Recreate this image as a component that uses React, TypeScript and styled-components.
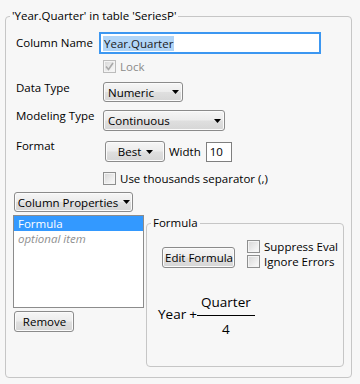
import styled, { createGlobalStyle } from "styled-components";

const GlobalStyle = createGlobalStyle`
  html, body {
    margin: 0;
    padding: 0;
    background: #f7f7f7;
  }

  body {
    font-family: "Open Sans", "Noto Sans", sans-serif;
    font-size: 11.5px;
    color: #000000;
  }
`;

const Page = styled.div`
  width: 360px;
  height: 384px;
  box-sizing: border-box;
  padding: 8px 0 0 5px;
  overflow: hidden;
`;

const GroupBox = styled.fieldset<{ $width: number; $height?: number }>`
  box-sizing: border-box;
  width: ${(p) => p.$width}px;
  ${(p) => (p.$height ? `height: ${p.$height}px;` : "")}
  min-width: 0;
  margin: 0;
  padding: 0;
  border: 1px solid #c6c6c6;
  border-radius: 4px;
`;

const Legend = styled.legend`
  margin-left: 4px;
  padding: 0 2px;
  height: 16px;
  line-height: 16px;
  white-space: nowrap;
`;

const GroupBody = styled.div<{ $pad: string }>`
  display: flex;
  flex-direction: column;
  padding: ${(p) => p.$pad};
`;

const Row = styled.div<{ $top: number; $height: number }>`
  display: flex;
  align-items: center;
  margin-top: ${(p) => p.$top}px;
  height: ${(p) => p.$height}px;
`;

const Label = styled.span<{ $shift?: number }>`
  width: 87px;
  flex: none;
  line-height: 16px;
  white-space: nowrap;
  ${(p) =>
    p.$shift !== undefined
      ? `align-self: flex-start; margin-top: ${p.$shift}px;`
      : ""}
`;

const NameField = styled.div`
  box-sizing: border-box;
  width: 222px;
  height: 22px;
  margin-left: -4px;
  padding: 0 2px;
  display: flex;
  align-items: center;
  background: #ffffff;
  border: 2px solid #3c97f1;
`;

const Selected = styled.span`
  background: #b1d5f7;
  color: #1b1b1b;
  line-height: 15px;
  padding: 0 1px;
`;

const Button = styled.button<{ $width: number; $height?: number; $align?: string }>`
  box-sizing: border-box;
  width: ${(p) => p.$width}px;
  height: ${(p) => p.$height ?? 20}px;
  margin: 0;
  padding: 0 3px 0 4px;
  display: inline-flex;
  align-items: center;
  justify-content: ${(p) => p.$align ?? "center"};
  gap: 5px;
  font: inherit;
  color: #000000;
  white-space: nowrap;
  border: 1px solid #8b8b8b;
  border-radius: 3px;
  background: linear-gradient(#f6f6f6 0%, #ececec 48%, #dfdfdf 52%, #d6d6d6 100%);
  box-shadow: inset 0 0 0 1px #fbfbfb;

  svg {
    flex: none;
  }
`;

const Arrow = () => (
  <svg width="7" height="4" viewBox="0 0 7 4">
    <polygon points="0,0 7,0 3.5,4" fill="#000000" />
  </svg>
);

const Check = styled.span<{ $disabled?: boolean }>`
  box-sizing: border-box;
  width: 13px;
  height: 13px;
  flex: none;
  display: inline-flex;
  align-items: center;
  justify-content: center;
  border: 1px solid ${(p) => (p.$disabled ? "#bcbcbc" : "#8e8f8f")};
  background: linear-gradient(135deg, #d6d6d6 0%, #f1f1f1 70%, #fafafa 100%);
  box-shadow: inset 0 0 0 1px #f4f4f4;
`;

const CheckLabel = styled.span<{ $disabled?: boolean }>`
  margin-left: 4px;
  line-height: 15px;
  white-space: nowrap;
  color: ${(p) => (p.$disabled ? "#8a8a8a" : "#000000")};
`;

const Indent = styled.div<{ $left: number; $top?: number }>`
  display: flex;
  align-items: center;
  margin-left: ${(p) => p.$left}px;
  margin-top: ${(p) => p.$top ?? 0}px;
`;

const SmallField = styled.div`
  box-sizing: border-box;
  width: 26px;
  height: 20px;
  margin-left: 5px;
  padding-left: 3px;
  display: flex;
  align-items: center;
  background: #ffffff;
  border: 1px solid #7f7f7f;
`;

const Bottom = styled.div`
  display: flex;
  align-items: flex-start;
  margin-top: 3px;
`;

const LeftColumn = styled.div`
  display: flex;
  flex-direction: column;
  margin-left: -3px;
`;

const ListBox = styled.div`
  box-sizing: border-box;
  width: 131px;
  height: 93px;
  background: #ffffff;
  border: 1px solid #8c8c8c;
`;

const ListItem = styled.div<{ $selected?: boolean; $hint?: boolean }>`
  height: 15px;
  line-height: 15px;
  padding-left: 4px;
  background: ${(p) => (p.$selected ? "#3399ff" : "transparent")};
  color: ${(p) => (p.$selected ? "#ffffff" : p.$hint ? "#8f8f8f" : "#000000")};
  font-style: ${(p) => (p.$hint ? "italic" : "normal")};
`;

const FormulaBox = styled.div`
  margin-left: 2px;
`;

const TopRow = styled.div`
  display: flex;
  align-items: flex-start;
`;

const Options = styled.div`
  display: flex;
  flex-direction: column;
  margin-left: 12px;
`;

const OptionRow = styled.div`
  display: flex;
  align-items: center;
  height: 15px;
`;

const Expression = styled.div`
  display: flex;
  align-items: center;
  margin-top: 25px;
  font-size: 13.5px;
`;

const Term = styled.span`
  line-height: 16px;
  margin-bottom: 3px;
`;

const Plus = styled.span`
  line-height: 16px;
  margin: 0 0 3px 3px;
`;

const Fraction = styled.div`
  display: flex;
  flex-direction: column;
  align-items: center;
  width: 58px;
`;

const Numerator = styled.span`
  line-height: 16px;
  margin-bottom: 5px;
`;

const Rule = styled.div`
  width: 100%;
  height: 1px;
  background: #000000;
`;

const Denominator = styled.span`
  line-height: 16px;
  margin-top: 5px;
`;

const CheckMark = () => (
  <svg width="9" height="9" viewBox="0 0 9 9">
    <path d="M1 4.5 L3.5 7.5 L8 1" fill="none" stroke="#a9a9a9" strokeWidth="1.6" />
  </svg>
);

export default function App() {
  return (
    <Page>
      <GlobalStyle />
      <GroupBox $width={347}>
        <Legend>'Year.Quarter' in table 'SeriesP'</Legend>
        <GroupBody $pad="0 0 10px 10px">
          <Row $top={8} $height={22}>
            <Label>Column Name</Label>
            <NameField>
              <Selected>Year.Quarter</Selected>
            </NameField>
          </Row>
          <Row $top={4} $height={16}>
            <Indent $left={87}>
              <Check $disabled>
                <CheckMark />
              </Check>
              <CheckLabel $disabled>Lock</CheckLabel>
            </Indent>
          </Row>
          <Row $top={8} $height={20}>
            <Label $shift={-2}>Data Type</Label>
            <Button $width={80} $align="space-between">
              <span>Numeric</span>
              <Arrow />
            </Button>
          </Row>
          <Row $top={8} $height={21}>
            <Label $shift={-2}>Modeling Type</Label>
            <Button $width={122} $height={21} $align="space-between">
              <span>Continuous</span>
              <Arrow />
            </Button>
          </Row>
          <Row $top={10} $height={21}>
            <Label $shift={-3}>Format</Label>
            <Indent $left={2}>
              <Button $width={60} $height={21}>
                <span>Best</span>
                <Arrow />
              </Button>
              <CheckLabel>Width</CheckLabel>
              <SmallField>10</SmallField>
            </Indent>
          </Row>
          <Row $top={8} $height={16}>
            <Indent $left={87}>
              <Check />
              <CheckLabel>Use thousands separator (,)</CheckLabel>
            </Indent>
          </Row>
          <Row $top={6} $height={20}>
            <Indent $left={-2}>
              <Button $width={119}>
                <span>Column Properties</span>
                <Arrow />
              </Button>
            </Indent>
          </Row>
          <Bottom>
            <LeftColumn>
              <ListBox>
                <ListItem $selected>Formula</ListItem>
                <ListItem $hint>optional item</ListItem>
              </ListBox>
              <Indent $left={1} $top={3}>
                <Button $width={60} $height={21}>
                  Remove
                </Button>
              </Indent>
            </LeftColumn>
            <FormulaBox>
              <GroupBox $width={198} $height={152}>
                <Legend>Formula</Legend>
                <GroupBody $pad="8px 0 0 11px">
                  <TopRow>
                    <Indent $left={4} $top={8}>
                      <Button $width={73} $height={21}>
                        Edit Formula
                      </Button>
                    </Indent>
                    <Options>
                      <OptionRow>
                        <Check />
                        <CheckLabel>Suppress Eval</CheckLabel>
                      </OptionRow>
                      <OptionRow>
                        <Check />
                        <CheckLabel>Ignore Errors</CheckLabel>
                      </OptionRow>
                    </Options>
                  </TopRow>
                  <Expression>
                    <Term>Year</Term>
                    <Plus>+</Plus>
                    <Fraction>
                      <Numerator>Quarter</Numerator>
                      <Rule />
                      <Denominator>4</Denominator>
                    </Fraction>
                  </Expression>
                </GroupBody>
              </GroupBox>
            </FormulaBox>
          </Bottom>
        </GroupBody>
      </GroupBox>
    </Page>
  );
}
